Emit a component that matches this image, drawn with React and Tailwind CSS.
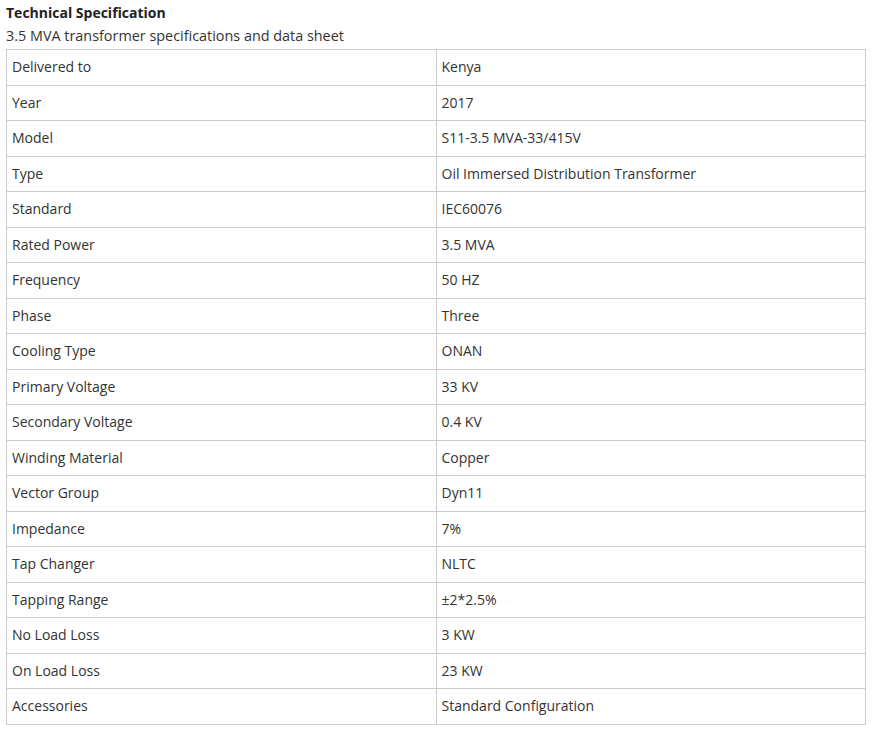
const rows = [
	["Delivered to", "Kenya"],
	["Year", "2017"],
	["Model", "S11-3.5 MVA-33/415V"],
	["Type", "Oil Immersed Distribution Transformer"],
	["Standard", "IEC60076"],
	["Rated Power", "3.5 MVA"],
	["Frequency", "50 HZ"],
	["Phase", "Three"],
	["Cooling Type", "ONAN"],
	["Primary Voltage", "33 KV"],
	["Secondary Voltage", "0.4 KV"],
	["Winding Material", "Copper"],
	["Vector Group", "Dyn11"],
	["Impedance", "7%"],
	["Tap Changer", "NLTC"],
	["Tapping Range", "±2*2.5%"],
	["No Load Loss", "3 KW"],
	["On Load Loss", "23 KW"],
	["Accessories", "Standard Configuration"],
];

export default function App() {
	return (
		<div className="min-h-[736px] bg-white pl-[6px] pr-[17px] pt-[3px] font-['Open_Sans',sans-serif] text-[14px] text-[#333]">
			<h3 className="text-[14px] font-bold leading-[20px] text-[#222]">
				Technical Specification
			</h3>
			<p className="mt-[1px] text-[14.4px] leading-[24px]">
				3.5 MVA transformer specifications and data sheet
			</p>
			<table className="mt-[1px] w-[860px] border-collapse">
				<tbody>
					{rows.map(([label, value]) => (
						<tr key={label} className="h-[35.5px]">
							<td className="w-1/2 border border-[#ccc] px-[5px] pt-0 pb-[1px] align-middle">
								{label}
							</td>
							<td className="border border-[#ccc] px-[5px] pt-0 pb-[1px] align-middle">
								{value}
							</td>
						</tr>
					))}
				</tbody>
			</table>
		</div>
	);
}
